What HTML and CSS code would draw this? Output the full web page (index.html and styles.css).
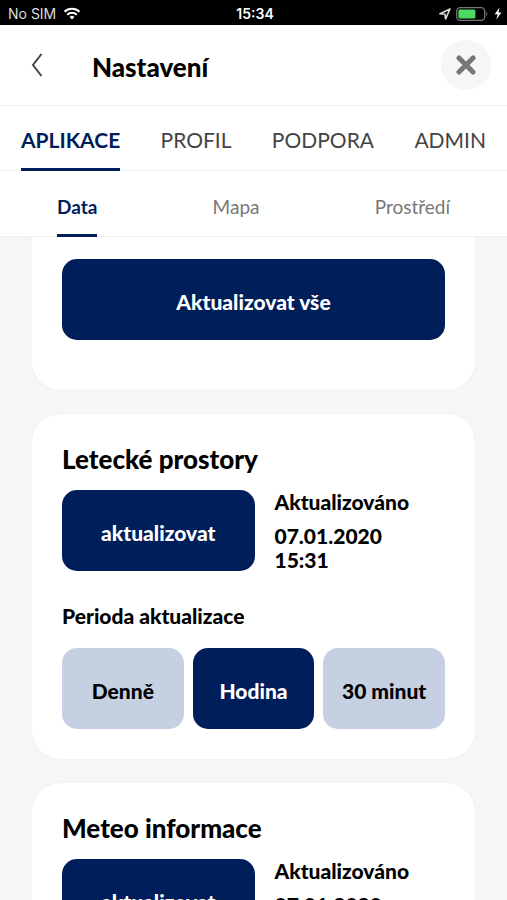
FILE: index.html
```html
<!DOCTYPE html>
<html lang="cs">
	<head>
		<meta charset="utf-8">
		<meta name="viewport" content="width=device-width, initial-scale=1">
		<title>Nastavení</title>
		<link rel="stylesheet" href="styles.css">
	</head>
	<body>
		<div class="app">
			<div class="status-bar">
				<div class="status-left">
					<span>No SIM</span>
					<svg class="wifi" viewBox="0 0 18 13" width="18" height="13" fill="none" stroke="#fff" stroke-width="2">
						<path d="M1.5 4.8 A10.8 10.8 0 0 1 16.5 4.8"/>
						<path d="M4.2 7.8 A6.8 6.8 0 0 1 13.8 7.8"/>
						<path d="M6.6 10 A3.4 3.4 0 0 1 11.4 10 L9 12.6 Z" fill="#fff" stroke="none"/>
					</svg>
				</div>
				<div class="status-time">15:34</div>
				<div class="status-right">
					<svg viewBox="0 0 12 12" width="12" height="12" fill="none" stroke="#ddd" stroke-width="1.6" stroke-linejoin="round">
						<path d="M11 1 L1 5.8 L6 6.2 L6.6 11 Z"/>
					</svg>
					<svg viewBox="0 0 33 14" width="33" height="14">
						<rect x=".7" y=".7" width="28" height="12.6" rx="3.5" fill="none" stroke="#777" stroke-width="1.3"/>
						<rect x="2.4" y="2.4" width="17" height="9.2" rx="1.5" fill="#4cd964"/>
						<path d="M30.3 4.5 Q32.4 7 30.3 9.5 Z" fill="#777"/>
					</svg>
					<svg viewBox="0 0 8 13" width="8" height="13" fill="#fff">
						<path d="M5.6 .5 L.6 7.2 H3.6 L2.3 12.5 L7.5 5.5 H4.5 Z"/>
					</svg>
				</div>
			</div>

			<header class="header">
				<button class="back" aria-label="Zpět">
					<svg viewBox="0 0 12 24" width="12" height="24" fill="none" stroke="#444" stroke-width="2">
						<path d="M10.5 1 L2 12 L10.5 23"/>
					</svg>
				</button>
				<h1>Nastavení</h1>
				<button class="close" aria-label="Zavřít">
					<svg viewBox="0 0 20 20" width="20" height="20" stroke="#777" stroke-width="5" stroke-linecap="round">
						<path d="M3 3 L17 17 M17 3 L3 17"/>
					</svg>
				</button>
			</header>

			<nav class="tabs">
				<a class="active" href="#aplikace">APLIKACE</a>
				<a href="#profil">PROFIL</a>
				<a href="#podpora">PODPORA</a>
				<a href="#admin">ADMIN</a>
			</nav>
			<nav class="subtabs">
				<a class="active" href="#data">Data</a>
				<a href="#mapa">Mapa</a>
				<a href="#prostredi">Prostředí</a>
			</nav>

			<main class="content">
				<section class="card card-first">
					<button class="btn">Aktualizovat vše</button>
				</section>

				<section class="card">
					<h2>Letecké prostory</h2>
					<div class="update">
						<button class="btn">aktualizovat</button>
						<div class="updated">
							<p>Aktualizováno</p>
							<p>07.01.2020<br>15:31</p>
						</div>
					</div>
					<h3>Perioda aktualizace</h3>
					<div class="period">
						<button class="btn light">Denně</button>
						<button class="btn">Hodina</button>
						<button class="btn light">30 minut</button>
					</div>
				</section>

				<section class="card">
					<h2>Meteo informace</h2>
					<div class="update">
						<button class="btn">aktualizovat</button>
						<div class="updated">
							<p>Aktualizováno</p>
							<p>07.01.2020<br>15:31</p>
						</div>
					</div>
				</section>
			</main>
		</div>
	</body>
</html>
```

FILE: styles.css
```css
* {
	box-sizing: border-box;
}
body {
	margin: 0;
	background: #f6f6f6;
	color: #000;
	font-family: Lato, "Open Sans", sans-serif;
}
h1, h2, h3, p {
	margin: 0;
}
button {
	border: 0;
	padding: 0;
	font-family: inherit;
}
svg {
	display: block;
}
.app {
	display: flex;
	flex-direction: column;
	height: 100vh;
	overflow: hidden;
}

/* status bar */
.status-bar {
	display: grid;
	grid-template-columns: 1fr auto 1fr;
	align-items: center;
	flex: none;
	height: 25px;
	padding: 2px 5px 0 8px;
	background: #000;
	color: #fff;
	font-family: Inter, "Liberation Sans", sans-serif;
	font-size: 14px;
}
.status-left, .status-right {
	display: flex;
	align-items: center;
	gap: 7px;
}
.status-left {
	color: #ddd;
}
.status-right {
	justify-content: flex-end;
	gap: 5px;
}
.status-time {
	font-weight: 600;
}

/* header */
.header {
	display: flex;
	align-items: center;
	flex: none;
	height: 81px;
	padding: 0 16px 0 21px;
	background: #fff;
	border-bottom: 1px solid #f0f0f0;
}
.header h1 {
	flex: 1;
	padding-top: 3px;
	font-size: 26px;
	font-weight: 900;
}
.back {
	display: flex;
	justify-content: center;
	width: 32px;
	margin-right: 39px;
	background: none;
}
.close {
	display: flex;
	align-items: center;
	justify-content: center;
	width: 50px;
	height: 50px;
	border-radius: 50%;
	background: #f6f6f6;
}

/* tabs */
.tabs, .subtabs {
	display: flex;
	justify-content: space-between;
	flex: none;
	background: #fff;
	border-bottom: 1px solid #f0f0f0;
}
.tabs a, .subtabs a {
	border-bottom: 3px solid transparent;
	margin-bottom: -1px;
	text-decoration: none;
}
.tabs {
	height: 65px;
	padding: 0 21px;
}
.tabs a {
	color: #444;
	font-size: 21px;
	line-height: 67px;
}
.subtabs {
	height: 66px;
	padding: 0 57px;
}
.subtabs a {
	color: #777;
	font-size: 19px;
	line-height: 72px;
}
.tabs a.active, .subtabs a.active {
	color: #001e5a;
	border-color: #001e5a;
	font-weight: bold;
}

/* cards */
.content {
	flex: 1;
	min-height: 0;
	overflow: hidden;
	padding: 0 31px;
}
.card {
	margin-bottom: 22px;
	padding: 30px;
	border: 1px solid #f2f2f2;
	border-radius: 30px;
	background: #fff;
}
.card-first {
	padding-top: 22px;
	padding-bottom: 50px;
	border-top: 0;
	border-radius: 0 0 30px 30px;
}
.card h2 {
	margin-bottom: 16px;
	font-size: 26px;
	font-weight: 900;
	line-height: 30px;
}
.card h3 {
	margin: 32px 0 20px;
	font-size: 21px;
	font-weight: 900;
	line-height: 24px;
}
.btn {
	width: 100%;
	height: 81px;
	padding-top: 4px;
	border-radius: 15px;
	background: #001e5a;
	color: #fff;
	font-size: 21px;
	font-weight: 900;
}
.btn.light {
	background: #c5d0e2;
	color: #000;
}
.update {
	display: grid;
	grid-template-columns: 1fr 1fr;
	column-gap: 20px;
	margin-right: -22px;
}
.updated {
	font-size: 21px;
	font-weight: 900;
	line-height: 24px;
}
.updated p + p {
	margin-top: 10px;
}
.period {
	display: grid;
	grid-template-columns: repeat(3, 1fr);
	gap: 9px;
}
```
